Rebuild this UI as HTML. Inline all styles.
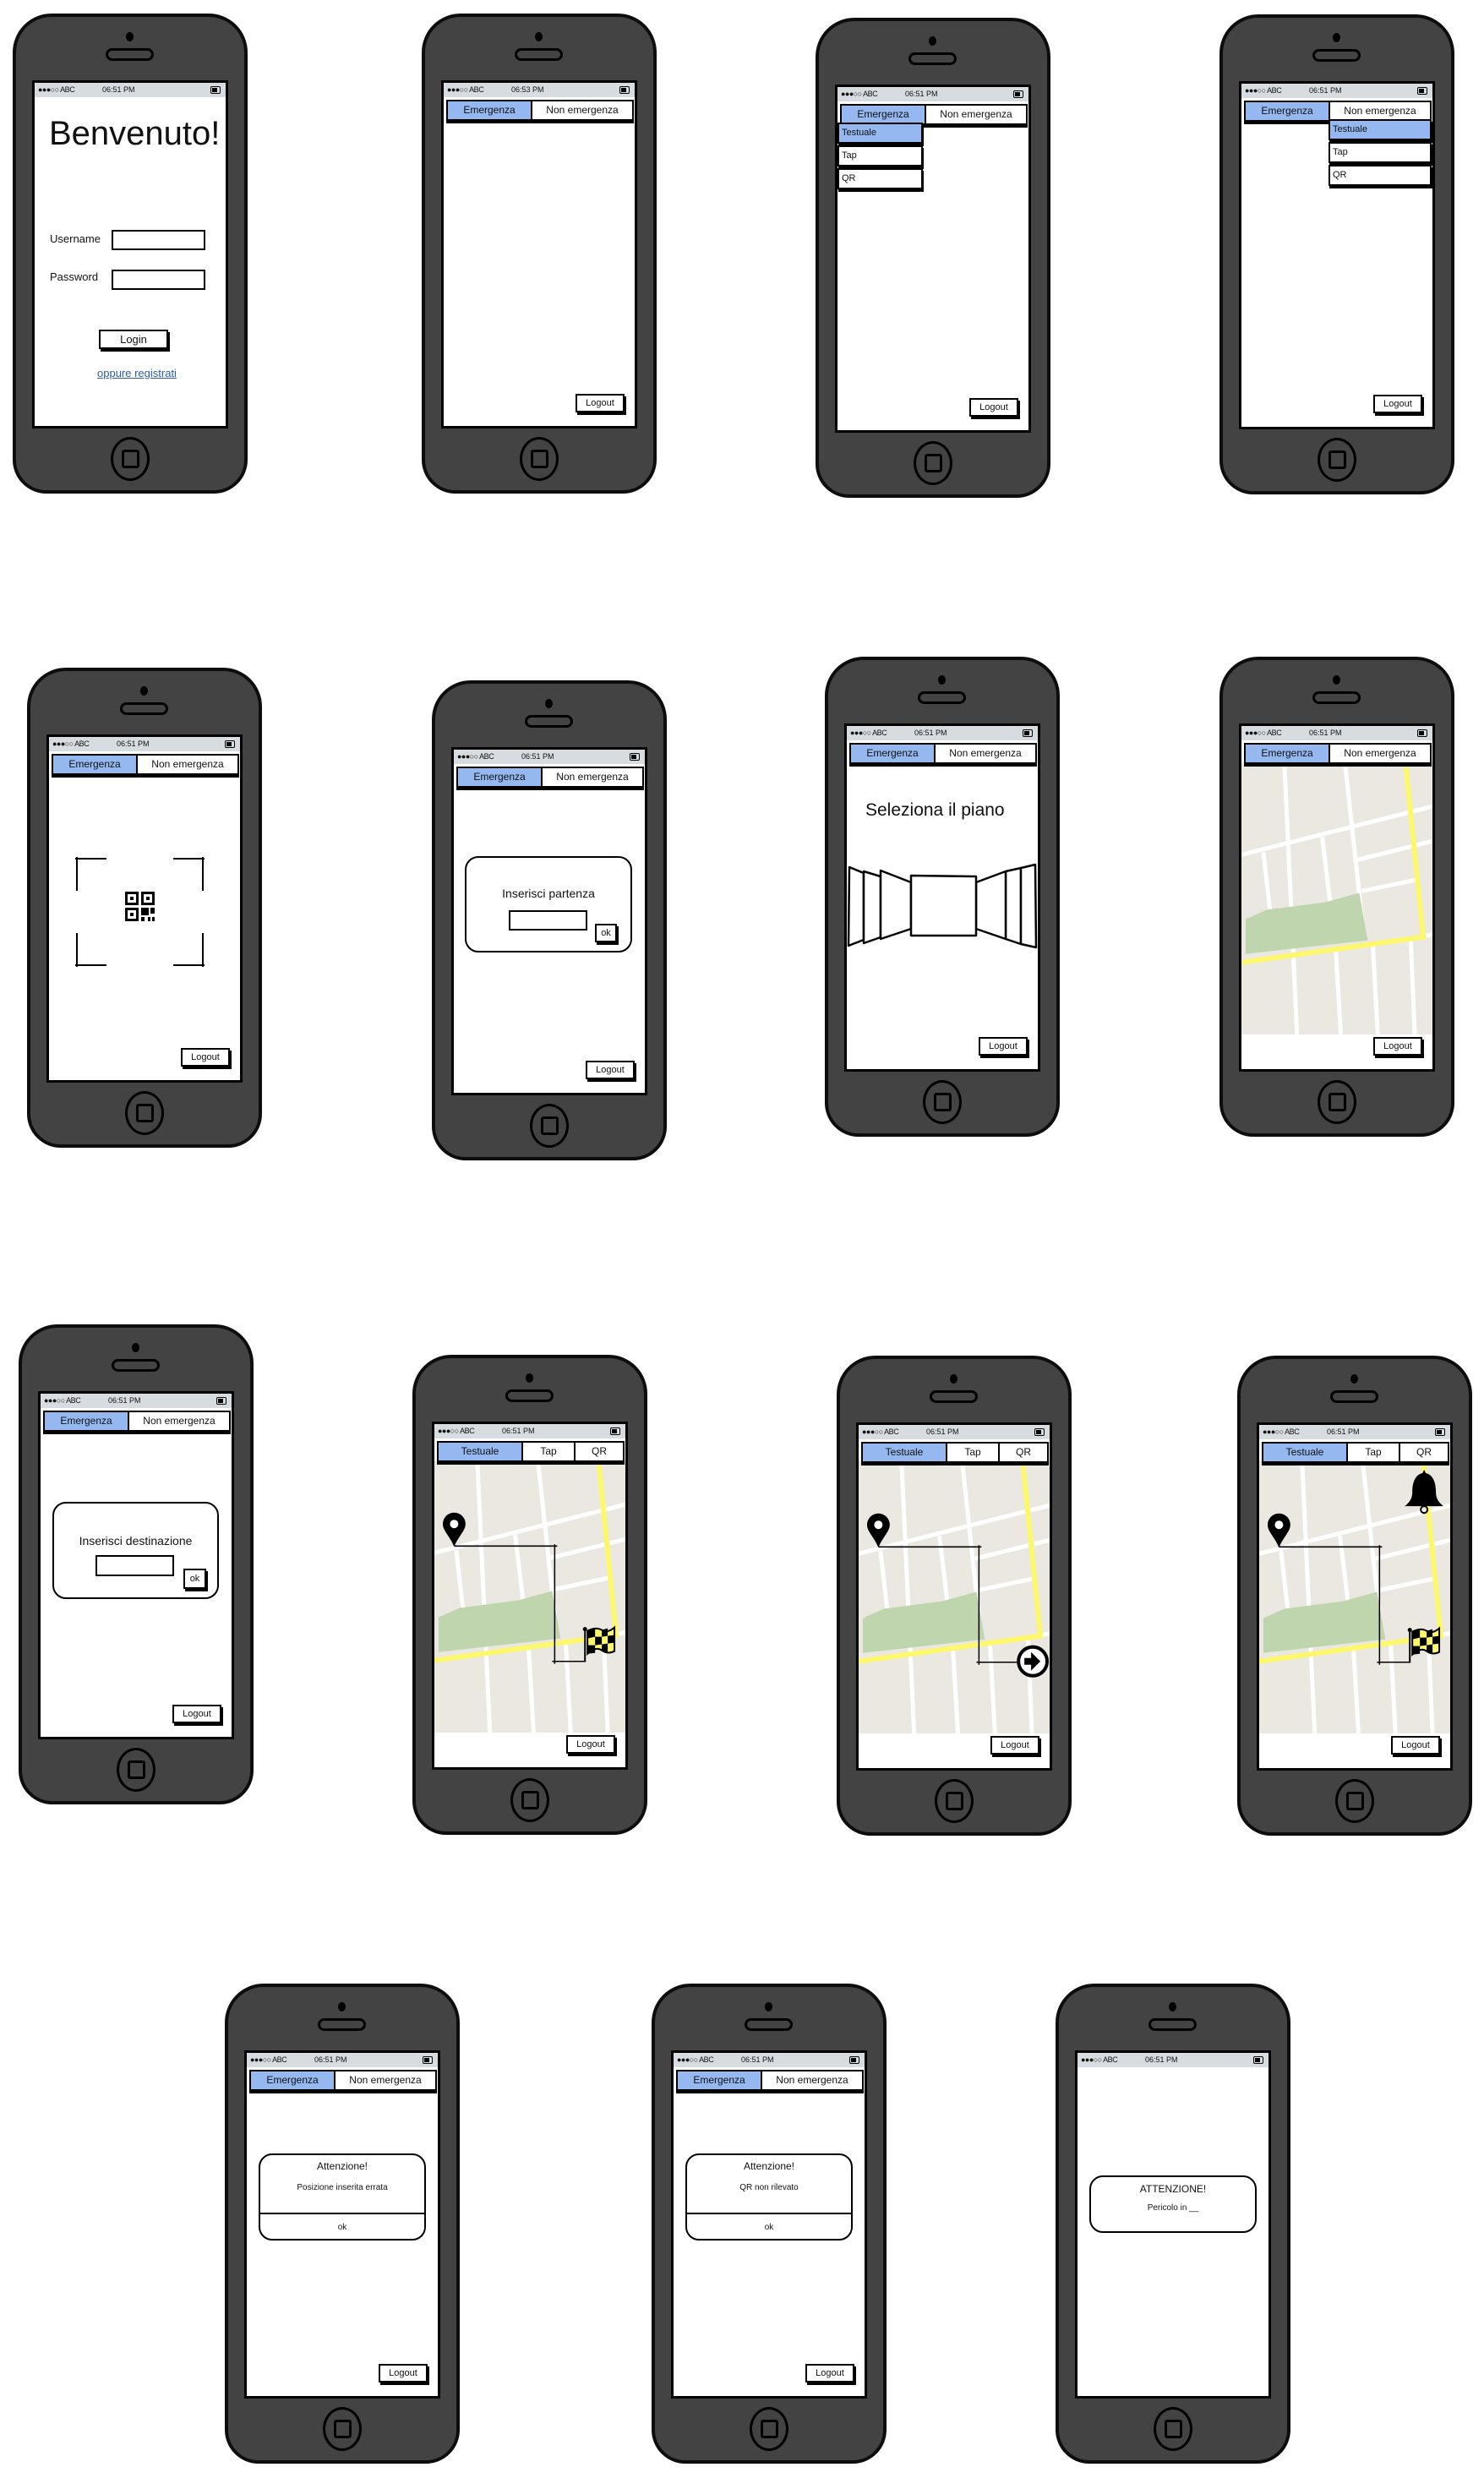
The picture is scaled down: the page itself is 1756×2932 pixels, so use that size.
<!DOCTYPE html>
<html><head><meta charset="utf-8"><style>
body{margin:0;width:1756px;height:2932px;background:#fff;position:relative;font-family:"Liberation Sans",sans-serif;overflow:hidden;color:#111}
.ph{position:absolute;width:278px;height:568px;background:#434343;border:4px solid #0d0d0d;border-radius:46px 46px 40px 40px;box-sizing:border-box}
.dot{position:absolute;left:130px;top:18px;width:9px;height:11px;border-radius:50%;background:#000}
.ear{position:absolute;left:106px;top:37px;width:51px;height:9px;border:3px solid #000;border-radius:10px}
.home{position:absolute;left:112px;top:497px;width:40px;height:46px;border:3px solid #000;border-radius:50%}
.home i{position:absolute;left:10px;top:12px;width:15px;height:16px;border:3px solid #000;border-radius:3px}
.scr{position:absolute;left:19px;top:75px;width:232px;height:412px;background:#fff;border:3px solid #000;box-sizing:border-box;overflow:hidden}
.sb{position:absolute;left:0;top:0;width:100%;height:17px;background:#d6dcdf;font-size:9px;line-height:17px}
.sb .a{position:absolute;left:4px;letter-spacing:-0.5px}.sb .t{position:absolute;left:80px}
.sb .b{position:absolute;right:6px;top:4px;width:10px;height:7px;border:1.5px solid #000;border-radius:2px}
.sb .b:after{content:"";position:absolute;left:1px;top:1px;width:6px;height:5px;background:#000}
.tabs{position:absolute;left:3px;top:20px;height:21px;display:flex;border:2px solid #000;box-shadow:0 3px 0 #000;width:218px;background:#fff}
.tabs span{border-right:2px solid #000;text-align:center;font-size:12px;line-height:21px;background:#fff;white-space:nowrap;overflow:hidden}
.tabs span:last-child{border-right:0;flex:1}
.tabs .on{background:#94b8ef}
.btn{position:absolute;border:2px solid #000;box-shadow:2px 3px 0 #000;background:#fff;font-size:11px;text-align:center;box-sizing:border-box}
.lo{right:12px;bottom:16px;width:58px;height:22px;line-height:18px}
.dd{position:absolute;border:2px solid #000;box-shadow:1px 3px 0 #000;background:#fff;font-size:11px;line-height:21px;padding-left:3px;box-sizing:border-box;height:25px}
.dd.on{background:#94b8ef}
.dlg{position:absolute;border:2px solid #000;border-radius:16px;background:#fff;box-sizing:border-box;text-align:center}
.inp{position:absolute;border:2px solid #000;background:#fff;box-sizing:border-box}
.map{position:absolute;left:0;top:43px}
</style></head><body>

<!-- Row 1 -->
<div class="ph" style="left:15px;top:16px"><div class="dot"></div><div class="ear"></div>
<div class="scr"><div class="sb"><span class="a">●●●○○ ABC</span><span class="t">06:51 PM</span><span class="b"></span></div>
<div style="position:absolute;left:17px;top:38px;font-size:40px;line-height:44px">Benvenuto!</div>
<div style="position:absolute;left:18px;top:177px;font-size:13px">Username</div>
<div class="inp" style="left:91px;top:174px;width:111px;height:24px"></div>
<div style="position:absolute;left:18px;top:222px;font-size:13px">Password</div>
<div class="inp" style="left:91px;top:221px;width:111px;height:24px"></div>
<div class="btn" style="left:76px;top:292px;width:82px;height:23px;line-height:19px;font-size:13px">Login</div>
<div style="position:absolute;left:74px;top:336px;font-size:13px;color:#2a5da8;text-decoration:underline">oppure registrati</div>
</div><div class="home"><i></i></div></div>

<div class="ph" style="left:499px;top:16px"><div class="dot"></div><div class="ear"></div>
<div class="scr"><div class="sb"><span class="a">●●●○○ ABC</span><span class="t">06:53 PM</span><span class="b"></span></div>
<div class="tabs"><span class="on" style="width:98px">Emergenza</span><span>Non emergenza</span></div>
<div class="btn lo">Logout</div>
</div><div class="home"><i></i></div></div>

<div class="ph" style="left:965px;top:21px"><div class="dot"></div><div class="ear"></div>
<div class="scr"><div class="sb"><span class="a">●●●○○ ABC</span><span class="t">06:51 PM</span><span class="b"></span></div>
<div class="tabs"><span class="on" style="width:98px">Emergenza</span><span>Non emergenza</span></div>
<div class="dd on" style="left:0;top:42px;width:101px">Testuale</div>
<div class="dd" style="left:0;top:69px;width:101px">Tap</div>
<div class="dd" style="left:0;top:96px;width:101px">QR</div>
<div class="btn lo">Logout</div>
</div><div class="home"><i></i></div></div>

<div class="ph" style="left:1443px;top:17px"><div class="dot"></div><div class="ear"></div>
<div class="scr"><div class="sb"><span class="a">●●●○○ ABC</span><span class="t">06:51 PM</span><span class="b"></span></div>
<div class="tabs"><span class="on" style="width:98px">Emergenza</span><span>Non emergenza</span></div>
<div class="dd on" style="left:103px;top:42px;width:122px">Testuale</div>
<div class="dd" style="left:103px;top:69px;width:122px">Tap</div>
<div class="dd" style="left:103px;top:96px;width:122px">QR</div>
<div class="btn lo">Logout</div>
</div><div class="home"><i></i></div></div>

<!-- Row 2 -->
<div class="ph" style="left:32px;top:790px"><div class="dot"></div><div class="ear"></div>
<div class="scr"><div class="sb"><span class="a">●●●○○ ABC</span><span class="t">06:51 PM</span><span class="b"></span></div>
<div class="tabs"><span class="on" style="width:98px">Emergenza</span><span>Non emergenza</span></div>
<svg style="position:absolute;left:0;top:0" width="226" height="406">
<g stroke="#000" stroke-width="2" fill="none">
<path d="M33 142V182M31 144H68M182 142V182M184 144H147M33 272V232M31 270H68M182 272V232M184 270H147"/>
</g>
<g fill="#000">
<rect x="90" y="183" width="16" height="16"/><rect x="109" y="183" width="16" height="16"/><rect x="90" y="202" width="16" height="16"/>
<rect x="109" y="202" width="9" height="9"/><rect x="120" y="202" width="5" height="7"/><rect x="109" y="213" width="4" height="5"/><rect x="117" y="213" width="3" height="5"/><rect x="122" y="213" width="3" height="5"/>
</g>
<g fill="#fff"><rect x="93" y="186" width="10" height="10"/><rect x="112" y="186" width="10" height="10"/><rect x="93" y="205" width="10" height="10"/></g>
<g fill="#000"><rect x="96" y="189" width="4" height="4"/><rect x="115" y="189" width="4" height="4"/><rect x="96" y="208" width="4" height="4"/></g>
</svg>
<div class="btn lo">Logout</div>
</div><div class="home"><i></i></div></div>

<div class="ph" style="left:511px;top:805px"><div class="dot"></div><div class="ear"></div>
<div class="scr"><div class="sb"><span class="a">●●●○○ ABC</span><span class="t">06:51 PM</span><span class="b"></span></div>
<div class="tabs"><span class="on" style="width:98px">Emergenza</span><span>Non emergenza</span></div>
<div class="dlg" style="left:13px;top:126px;width:198px;height:114px"><div style="margin-top:34px;font-size:14px">Inserisci partenza</div></div>
<div class="inp" style="left:65px;top:190px;width:93px;height:24px"></div>
<div class="btn" style="left:167px;top:206px;width:26px;height:22px;line-height:18px">ok</div>
<div class="btn lo">Logout</div>
</div><div class="home"><i></i></div></div>

<div class="ph" style="left:976px;top:777px"><div class="dot"></div><div class="ear"></div>
<div class="scr"><div class="sb"><span class="a">●●●○○ ABC</span><span class="t">06:51 PM</span><span class="b"></span></div>
<div class="tabs"><span class="on" style="width:98px">Emergenza</span><span>Non emergenza</span></div>
<div style="position:absolute;left:22px;top:88px;font-size:21px">Seleziona il piano</div>
<svg style="position:absolute;left:0;top:0" width="226" height="406">
<g stroke="#000" stroke-width="2.5" fill="#fff" stroke-linejoin="round">
<polygon points="3,167 20,174 20,253 2,260"/>
<polygon points="20,172 40,178 40,250 20,257"/>
<polygon points="40,171 76,185 76,240 40,252"/>
<polygon points="188,172 206,168 206,258 188,252"/>
<polygon points="206,168 223,164 224,262 206,258"/>
<polygon points="153,185 188,172 188,252 153,240"/>
<polygon points="76,177 153,178 153,248 76,248"/>
</g></svg>
<div class="btn lo">Logout</div>
</div><div class="home"><i></i></div></div>

<div class="ph" style="left:1443px;top:777px"><div class="dot"></div><div class="ear"></div>
<div class="scr"><div class="sb"><span class="a">●●●○○ ABC</span><span class="t">06:51 PM</span><span class="b"></span></div>
<svg class="map" width="226" height="322" viewBox="0 0 227 321" preserveAspectRatio="none">
<rect width="227" height="321" fill="#ebe8e1"/>
<path d="M51 0L66 321M123 0L146 210M26 106L34 175M96 88L106 170M112 220L118 321M156 212L162 321M201 206L206 321M0 109L227 52M138 115L227 93M143 152L210 138M190 210L227 203" stroke="#fff" stroke-width="5" fill="none"/>
<path d="M5 185L30 174L100 165L118 160L140 154L150 210L5 226Z" fill="#bed5ad"/>
<path d="M0 236L216 206L195 0" stroke="#fdf76b" stroke-width="6" fill="none"/>
</svg>
<div class="tabs"><span class="on" style="width:98px">Emergenza</span><span>Non emergenza</span></div>
<div class="btn lo">Logout</div>
</div><div class="home"><i></i></div></div>

<!-- Row 3 -->
<div class="ph" style="left:22px;top:1567px"><div class="dot"></div><div class="ear"></div>
<div class="scr"><div class="sb"><span class="a">●●●○○ ABC</span><span class="t">06:51 PM</span><span class="b"></span></div>
<div class="tabs"><span class="on" style="width:98px">Emergenza</span><span>Non emergenza</span></div>
<div class="dlg" style="left:14px;top:128px;width:197px;height:115px"><div style="margin-top:36px;font-size:14px">Inserisci destinazione</div></div>
<div class="inp" style="left:65px;top:191px;width:93px;height:25px"></div>
<div class="btn" style="left:169px;top:207px;width:27px;height:24px;line-height:20px">ok</div>
<div class="btn lo">Logout</div>
</div><div class="home"><i></i></div></div>

<div class="ph" style="left:488px;top:1603px"><div class="dot"></div><div class="ear"></div>
<div class="scr"><div class="sb"><span class="a">●●●○○ ABC</span><span class="t">06:51 PM</span><span class="b"></span></div>
<svg class="map" width="226" height="322" viewBox="0 0 227 321" preserveAspectRatio="none">
<rect width="227" height="321" fill="#ebe8e1"/>
<path d="M51 0L66 321M123 0L146 210M26 106L34 175M96 88L106 170M112 220L118 321M156 212L162 321M201 206L206 321M0 109L227 52M138 115L227 93M143 152L210 138M190 210L227 203" stroke="#fff" stroke-width="5" fill="none"/>
<path d="M5 185L30 174L100 165L118 160L140 154L150 210L5 226Z" fill="#bed5ad"/>
<path d="M0 236L216 206L195 0" stroke="#fdf76b" stroke-width="6" fill="none"/>
<path d="M24 101H146M143 99V240M140 237H180" stroke="#000" stroke-width="1.5" fill="none"/>
<path d="M23.5 102C19 90 10 83 10 75A13.5 13.5 0 1 1 37 75C37 83 28 90 23.5 102Z" fill="#000"/><circle cx="23.5" cy="75" r="5" fill="#fff"/>
<path d="M179 237V200" stroke="#000" stroke-width="2"/><circle cx="179" cy="199" r="2.5"/>
<path d="M182 201Q192 196 199 200T214 197V225Q206 229 199 224T182 228Z" fill="#fdf76b" stroke="#000" stroke-width="2"/>
<path d="M182 201L191 199V208L182 210ZM199 200L206 198V207L199 208ZM191 208L199 208V217L191 218ZM206 207L214 206V215L206 216ZM182 218L191 218V227L182 228ZM199 217L206 216V226L199 224Z" fill="#000"/>
</svg>
<div class="tabs"><span class="on" style="width:98px">Testuale</span><span style="width:60px">Tap</span><span>QR</span></div>
<div class="btn lo">Logout</div>
</div><div class="home"><i></i></div></div>

<div class="ph" style="left:990px;top:1604px"><div class="dot"></div><div class="ear"></div>
<div class="scr"><div class="sb"><span class="a">●●●○○ ABC</span><span class="t">06:51 PM</span><span class="b"></span></div>
<svg class="map" width="226" height="322" viewBox="0 0 227 321" preserveAspectRatio="none">
<rect width="227" height="321" fill="#ebe8e1"/>
<path d="M51 0L66 321M123 0L146 210M26 106L34 175M96 88L106 170M112 220L118 321M156 212L162 321M201 206L206 321M0 109L227 52M138 115L227 93M143 152L210 138M190 210L227 203" stroke="#fff" stroke-width="5" fill="none"/>
<path d="M5 185L30 174L100 165L118 160L140 154L150 210L5 226Z" fill="#bed5ad"/>
<path d="M0 236L216 206L195 0" stroke="#fdf76b" stroke-width="6" fill="none"/>
<path d="M24 101H146M143 99V240M140 237H188" stroke="#000" stroke-width="1.5" fill="none"/>
<path d="M23.5 102C19 90 10 83 10 75A13.5 13.5 0 1 1 37 75C37 83 28 90 23.5 102Z" fill="#000"/><circle cx="23.5" cy="75" r="5" fill="#fff"/>
<circle cx="207" cy="236" r="17" fill="#fff" stroke="#000" stroke-width="4"/>
<path d="M197 232H205V225L216 236L205 247V240H197Z" fill="#000"/>
</svg>
<div class="tabs"><span class="on" style="width:98px">Testuale</span><span style="width:60px">Tap</span><span>QR</span></div>
<div class="btn lo">Logout</div>
</div><div class="home"><i></i></div></div>

<div class="ph" style="left:1464px;top:1604px"><div class="dot"></div><div class="ear"></div>
<div class="scr"><div class="sb"><span class="a">●●●○○ ABC</span><span class="t">06:51 PM</span><span class="b"></span></div>
<svg class="map" width="226" height="322" viewBox="0 0 227 321" preserveAspectRatio="none">
<rect width="227" height="321" fill="#ebe8e1"/>
<path d="M51 0L66 321M123 0L146 210M26 106L34 175M96 88L106 170M112 220L118 321M156 212L162 321M201 206L206 321M0 109L227 52M138 115L227 93M143 152L210 138M190 210L227 203" stroke="#fff" stroke-width="5" fill="none"/>
<path d="M5 185L30 174L100 165L118 160L140 154L150 210L5 226Z" fill="#bed5ad"/>
<path d="M0 236L216 206L195 0" stroke="#fdf76b" stroke-width="6" fill="none"/>
<path d="M24 101H146M143 99V240M140 237H180" stroke="#000" stroke-width="1.5" fill="none"/>
<path d="M23.5 102C19 90 10 83 10 75A13.5 13.5 0 1 1 37 75C37 83 28 90 23.5 102Z" fill="#000"/><circle cx="23.5" cy="75" r="5" fill="#fff"/>
<path d="M179 237V200" stroke="#000" stroke-width="2"/><circle cx="179" cy="199" r="2.5"/>
<path d="M182 201Q192 196 199 200T214 197V225Q206 229 199 224T182 228Z" fill="#fdf76b" stroke="#000" stroke-width="2"/>
<path d="M182 201L191 199V208L182 210ZM199 200L206 198V207L199 208ZM191 208L199 208V217L191 218ZM206 207L214 206V215L206 216ZM182 218L191 218V227L182 228ZM199 217L206 216V226L199 224Z" fill="#000"/>
<path d="M196 10L198 14C207 16 210 26 210 36C210 44 213 48 219 53H173C179 48 182 44 182 36C182 26 185 16 194 14Z" fill="#000"/>
<circle cx="196" cy="57" r="4" fill="none" stroke="#000" stroke-width="2"/>
</svg>
<div class="tabs"><span class="on" style="width:98px">Testuale</span><span style="width:60px">Tap</span><span>QR</span></div>
<div class="btn lo">Logout</div>
</div><div class="home"><i></i></div></div>

<!-- Row 4 -->
<div class="ph" style="left:266px;top:2347px"><div class="dot"></div><div class="ear"></div>
<div class="scr"><div class="sb"><span class="a">●●●○○ ABC</span><span class="t">06:51 PM</span><span class="b"></span></div>
<div class="tabs"><span class="on" style="width:98px">Emergenza</span><span>Non emergenza</span></div>
<div class="dlg" style="left:14px;top:119px;width:198px;height:103px">
<div style="margin-top:6px;font-size:12px">Attenzione!</div>
<div style="margin-top:13px;font-size:10px">Posizione inserita errata</div>
<div style="position:absolute;left:0;right:0;top:68px;border-top:2px solid #000"></div>
<div style="position:absolute;left:0;right:0;top:80px;font-size:10px">ok</div></div>
<div class="btn lo">Logout</div>
</div><div class="home"><i></i></div></div>

<div class="ph" style="left:771px;top:2347px"><div class="dot"></div><div class="ear"></div>
<div class="scr"><div class="sb"><span class="a">●●●○○ ABC</span><span class="t">06:51 PM</span><span class="b"></span></div>
<div class="tabs"><span class="on" style="width:98px">Emergenza</span><span>Non emergenza</span></div>
<div class="dlg" style="left:14px;top:119px;width:198px;height:103px">
<div style="margin-top:6px;font-size:12px">Attenzione!</div>
<div style="margin-top:13px;font-size:10px">QR non rilevato</div>
<div style="position:absolute;left:0;right:0;top:68px;border-top:2px solid #000"></div>
<div style="position:absolute;left:0;right:0;top:80px;font-size:10px">ok</div></div>
<div class="btn lo">Logout</div>
</div><div class="home"><i></i></div></div>

<div class="ph" style="left:1249px;top:2347px"><div class="dot"></div><div class="ear"></div>
<div class="scr"><div class="sb"><span class="a">●●●○○ ABC</span><span class="t">06:51 PM</span><span class="b"></span></div>
<div class="dlg" style="left:14px;top:145px;width:198px;height:68px">
<div style="margin-top:7px;font-size:12px">ATTENZIONE!</div>
<div style="margin-top:10px;font-size:10px">Pericolo in __</div></div>
</div><div class="home"><i></i></div></div>

</body></html>
